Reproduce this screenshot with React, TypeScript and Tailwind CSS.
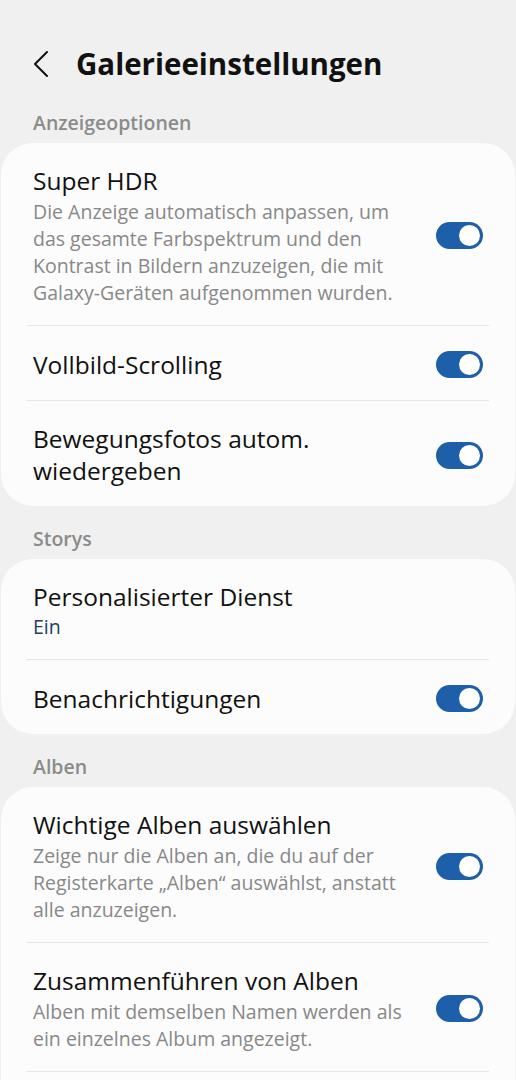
import { ReactNode } from "react";

function Toggle() {
  return (
    <div className="relative h-[27px] w-[47px] shrink-0 rounded-full bg-[#1d5fa8]">
      <div className="absolute right-[3px] top-[3px] h-[21px] w-[21px] rounded-full bg-white" />
    </div>
  );
}

function Row({
  title,
  desc,
  sub,
  toggle = true,
  divider = true,
}: {
  title: ReactNode;
  desc?: ReactNode;
  sub?: string;
  toggle?: boolean;
  divider?: boolean;
}) {
  return (
    <div className="mx-[26px] flex flex-col">
      <div className="flex min-h-[74px] items-center gap-2 px-[6px] pb-[19px] pt-[22px]">
        <div className="flex-1">
          <div className="text-[24.5px] leading-[32px] text-[#111]">{title}</div>
          {desc && (
            <div className="mt-[1px] w-[385px] text-[19.5px] leading-[27px] text-[#888]">
              {desc}
            </div>
          )}
          {sub && (
            <div className="text-[19.5px] leading-[27px] text-[#1f3d63]">{sub}</div>
          )}
        </div>
        {toggle && <Toggle />}
      </div>
      {divider && <div className="h-px bg-[#e6e6e6]" />}
    </div>
  );
}

function Section({ label, children }: { label: string; children: ReactNode }) {
  return (
    <div>
      <div className="px-[33px] pb-[8px] pt-[21px] text-[19.5px] font-semibold leading-[24px] text-[#8b8b8b]">
        {label}
      </div>
      <div className="mx-[1px] overflow-hidden rounded-[32px] bg-[#fcfcfc]">{children}</div>
    </div>
  );
}

export default function App() {
  return (
    <div
      className="h-[1080px] w-[516px] overflow-hidden bg-[#f0f0f0]"
      style={{ fontFamily: "'Open Sans', 'Noto Sans', sans-serif" }}
    >
      {/* HEADER */}
      <div className="flex items-center pb-[6px] pt-[44px]">
        <svg width="76" height="40" viewBox="0 0 76 40" className="shrink-0">
          <path d="M47 8 L35 20 L47 32" fill="none" stroke="#111" strokeWidth="2" strokeLinecap="round" strokeLinejoin="round" />
        </svg>
        <h1 className="text-[29.5px] font-bold leading-[40px] text-[#111]">Galerieeinstellungen</h1>
      </div>

      <Section label="Anzeigeoptionen">
        <Row
          title="Super HDR"
          desc="Die Anzeige automatisch anpassen, um das gesamte Farbspektrum und den Kontrast in Bildern anzuzeigen, die mit Galaxy-Geräten aufgenommen wurden."
        />
        <Row title="Vollbild-Scrolling" />
        <Row
          title={
            <>
              Bewegungsfotos autom.
              <br />
              wiedergeben
            </>
          }
          divider={false}
        />
      </Section>

      <Section label="Storys">
        <Row title="Personalisierter Dienst" sub="Ein" toggle={false} />
        <Row title="Benachrichtigungen" divider={false} />
      </Section>

      <Section label="Alben">
        <Row
          title="Wichtige Alben auswählen"
          desc="Zeige nur die Alben an, die du auf der Registerkarte „Alben“ auswählst, anstatt alle anzuzeigen."
        />
        <Row
          title="Zusammenführen von Alben"
          desc="Alben mit demselben Namen werden als ein einzelnes Album angezeigt."
        />
        <div className="h-[60px]" />
      </Section>
    </div>
  );
}
